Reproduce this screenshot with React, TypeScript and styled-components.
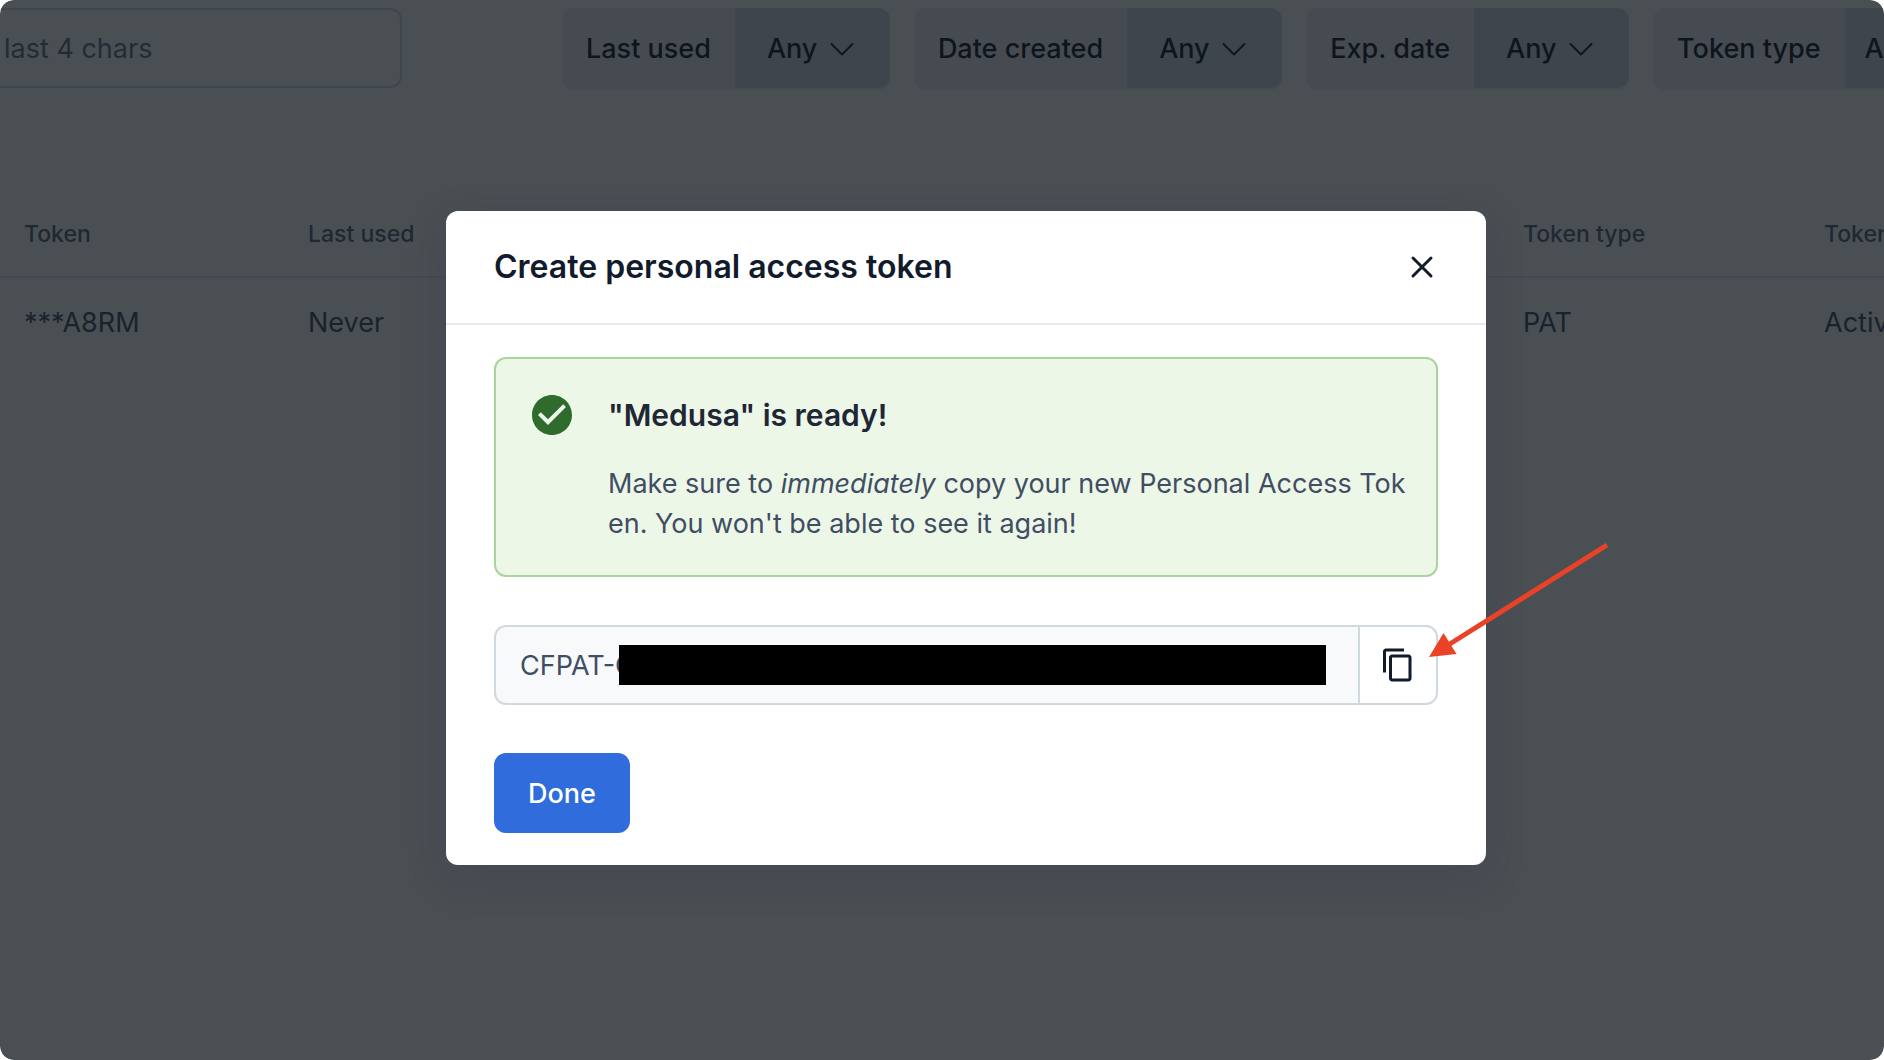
import React, { useId } from "react";
import styled, { createGlobalStyle } from "styled-components";
import { MdCheckCircle, MdContentCopy } from "react-icons/md";

const color = {
  gray100: "#f7f9fa",
  gray200: "#e7ebee",
  gray300: "#cfd9e0",
  gray500: "#67728a",
  gray600: "#5a657c",
  gray700: "#414d63",
  gray800: "#1f2737",
  gray900: "#111b2b",
  filterLabel: "#efecf5",
  filterValue: "#d4d8e4",
  green100: "#ecf7e8",
  green300: "#a9d49c",
  green600: "#2f6b2d",
  blue600: "#306cdb",
  red: "#ea4226",
};

const GlobalStyle = createGlobalStyle`
  *, *::before, *::after { box-sizing: border-box; }
  body {
    margin: 0;
    background: #ffffff;
    color: ${color.gray900};
    font-family: Inter, "Liberation Sans", sans-serif;
    font-size: 27px;
    line-height: 40px;
  }
  button, input, select { font: inherit; color: inherit; margin: 0; }
`;

const Page = styled.div`
  position: relative;
  min-height: 100vh;
  overflow: hidden;
  border-radius: 14px;
`;

const Toolbar = styled.div`
  display: flex;
  align-items: flex-start;
  gap: 160px;
  padding-top: 8px;
`;

const SearchInput = styled.input`
  flex: 0 0 402px;
  width: 402px;
  height: 80px;
  padding: 0 24px 0 4px;
  border: 2px solid ${color.filterValue};
  border-left: 0;
  border-radius: 0 12px 12px 0;
  background: #ffffff;
  &::placeholder { color: ${color.gray500}; opacity: 1; }
`;

const Filters = styled.div`
  display: flex;
  gap: 24px;
`;

const FilterBox = styled.div`
  display: flex;
  flex: none;
  height: 82px;
  border-radius: 12px;
  background: ${color.filterLabel};
  font-weight: 500;
`;

const FilterLabel = styled.label`
  padding: 21px 24px;
  white-space: nowrap;
`;

const SelectWrap = styled.span`
  position: relative;
  display: flex;
  width: 155px;
  height: 80px;
`;

const Select = styled.select<{ $inset: number }>`
  appearance: none;
  width: 100%;
  padding: 2px ${(p) => p.$inset}px 0;
  border: 0;
  border-radius: 0 12px 12px 0;
  background: ${color.filterValue};
`;

const Chevron = styled.svg`
  position: absolute;
  top: 28px;
  right: 35px;
  width: 26px;
  height: 26px;
  pointer-events: none;
`;

const TokenTable = styled.table`
  width: 100%;
  margin-top: 100px;
  table-layout: fixed;
  border-collapse: collapse;
  white-space: nowrap;
`;

const Col = styled.col<{ $width?: string }>`
  width: ${(p) => p.$width ?? "auto"};
`;

const HeadCell = styled.th`
  padding: 24px 0 22px 24px;
  border-bottom: 2px solid ${color.gray200};
  color: ${color.gray600};
  font-size: 23px;
  font-weight: 500;
  text-align: left;
`;

const Cell = styled.td`
  padding: 25px 0 24px 24px;
  color: ${color.gray700};
`;

const Overlay = styled.div`
  position: absolute;
  inset: 0;
  display: flex;
  align-items: center;
  justify-content: center;
  padding: 16px 0 0 48px;
  border-radius: 14px;
  background: rgba(13, 20, 25, 0.75);
`;

const Dialog = styled.section`
  width: 1040px;
  max-width: 100%;
  border-radius: 12px;
  background: #ffffff;
  box-shadow: 0 12px 40px rgba(45, 45, 85, 0.18);
`;

const DialogHeader = styled.header`
  display: flex;
  align-items: center;
  justify-content: space-between;
  padding: 32px 40px 32px 48px;
  border-bottom: 2px solid ${color.gray200};
`;

const DialogTitle = styled.h2`
  margin: 0;
  font-size: 32px;
  line-height: 48px;
  font-weight: 600;
`;

const CloseButton = styled.button`
  display: grid;
  place-items: center;
  width: 48px;
  height: 48px;
  padding: 0;
  border: 0;
  background: none;
`;

const DialogBody = styled.div`
  display: flex;
  flex-direction: column;
  align-items: flex-start;
  gap: 48px;
  padding: 32px 48px;
`;

const Note = styled.div`
  display: flex;
  align-self: stretch;
  gap: 32px;
  padding: 32px 32px 31px;
  border: 2px solid ${color.green300};
  border-radius: 12px;
  background: ${color.green100};
`;

const SuccessIcon = styled(MdCheckCircle)`
  flex: none;
  width: 48px;
  height: 48px;
  color: ${color.green600};
`;

const NoteContent = styled.div`
  flex: 1;
  white-space: nowrap;
`;

const NoteTitle = styled.h3`
  margin: 0 0 25px;
  color: ${color.gray800};
  font-size: 30px;
  line-height: 48px;
  font-weight: 600;
`;

const NoteText = styled.p`
  margin: 0;
  color: ${color.gray700};
`;

const TokenField = styled.div`
  position: relative;
  display: flex;
  align-self: stretch;
  height: 80px;
`;

const TokenInput = styled.input`
  flex: 1;
  min-width: 0;
  padding: 2px 24px 0;
  border: 2px solid ${color.gray300};
  border-radius: 12px 0 0 12px;
  background: ${color.gray100};
  color: ${color.gray700};
`;

const CopyButton = styled.button`
  display: grid;
  place-items: center;
  width: 78px;
  padding: 0;
  border: 2px solid ${color.gray300};
  border-left: 0;
  border-radius: 0 12px 12px 0;
  background: #ffffff;
`;

const CopyIcon = styled(MdContentCopy)`
  width: 36px;
  height: 36px;
`;

const Redaction = styled.span`
  position: absolute;
  top: 20px;
  bottom: 20px;
  left: 125px;
  right: 112px;
  background: #000000;
`;

const Arrow = styled.svg`
  position: absolute;
  top: -85px;
  right: -174px;
  width: 187px;
  height: 120px;
  pointer-events: none;
`;

const DoneButton = styled.button`
  height: 80px;
  padding: 2px 34px 0;
  border: 0;
  border-radius: 12px;
  background: ${color.blue600};
  color: #ffffff;
  font-weight: 500;
`;

function Filter({ label, inset = 32 }: { label: string; inset?: number }) {
  const id = useId();
  return (
    <FilterBox>
      <FilterLabel htmlFor={id}>{label}</FilterLabel>
      <SelectWrap>
        <Select id={id} $inset={inset} defaultValue="any">
          <option value="any">Any</option>
        </Select>
        <Chevron viewBox="0 0 26 26" aria-hidden="true">
          <path d="M2.5 8 13 18.5 23.5 8" fill="none" stroke={color.gray900} strokeWidth="2" strokeLinecap="round" strokeLinejoin="round" />
        </Chevron>
      </SelectWrap>
    </FilterBox>
  );
}

export default function App() {
  return (
    <>
      <GlobalStyle />
      <Page>
        <Toolbar>
          <SearchInput type="search" placeholder="last 4 chars" aria-label="last 4 chars" />
          <Filters>
            <Filter label="Last used" />
            <Filter label="Date created" />
            <Filter label="Exp. date" />
            <Filter label="Token type" inset={20} />
          </Filters>
        </Toolbar>

        <TokenTable>
          <colgroup>
            <Col $width="284px" />
            <Col />
            <Col $width="301px" />
            <Col $width="84px" />
          </colgroup>
          <thead>
            <tr>
              <HeadCell scope="col">Token</HeadCell>
              <HeadCell scope="col">Last used</HeadCell>
              <HeadCell scope="col">Token type</HeadCell>
              <HeadCell scope="col">Token status</HeadCell>
            </tr>
          </thead>
          <tbody>
            <tr>
              <Cell>***A8RM</Cell>
              <Cell>Never</Cell>
              <Cell>PAT</Cell>
              <Cell>Active</Cell>
            </tr>
          </tbody>
        </TokenTable>

        <Overlay>
          <Dialog role="dialog" aria-modal="true" aria-labelledby="dialog-title">
            <DialogHeader>
              <DialogTitle id="dialog-title">Create personal access token</DialogTitle>
              <CloseButton type="button" aria-label="Close">
                <svg width="24" height="24" viewBox="0 0 24 24" aria-hidden="true">
                  <path d="M3 3 21 21M21 3 3 21" fill="none" stroke={color.gray900} strokeWidth="3" strokeLinecap="round" />
                </svg>
              </CloseButton>
            </DialogHeader>
            <DialogBody>
              <Note>
                <SuccessIcon aria-hidden="true" />
                <NoteContent>
                  <NoteTitle>"Medusa" is ready!</NoteTitle>
                  <NoteText>
                    Make sure to <em>immediately</em> copy your new Personal Access Tok
                    <br />
                    en. You won't be able to see it again!
                  </NoteText>
                </NoteContent>
              </Note>
              <TokenField>
                <TokenInput type="text" readOnly value="CFPAT-C" aria-label="Personal access token" />
                <CopyButton type="button" aria-label="Copy token">
                  <CopyIcon aria-hidden="true" />
                </CopyButton>
                <Redaction />
                <Arrow viewBox="0 0 187 120" aria-hidden="true">
                  <path d="M182 5 20 107" stroke={color.red} strokeWidth="5" />
                  <path d="M4 117 18.500 93 31.500 114Z" fill={color.red} />
                </Arrow>
              </TokenField>
              <DoneButton type="button">Done</DoneButton>
            </DialogBody>
          </Dialog>
        </Overlay>
      </Page>
    </>
  );
}
